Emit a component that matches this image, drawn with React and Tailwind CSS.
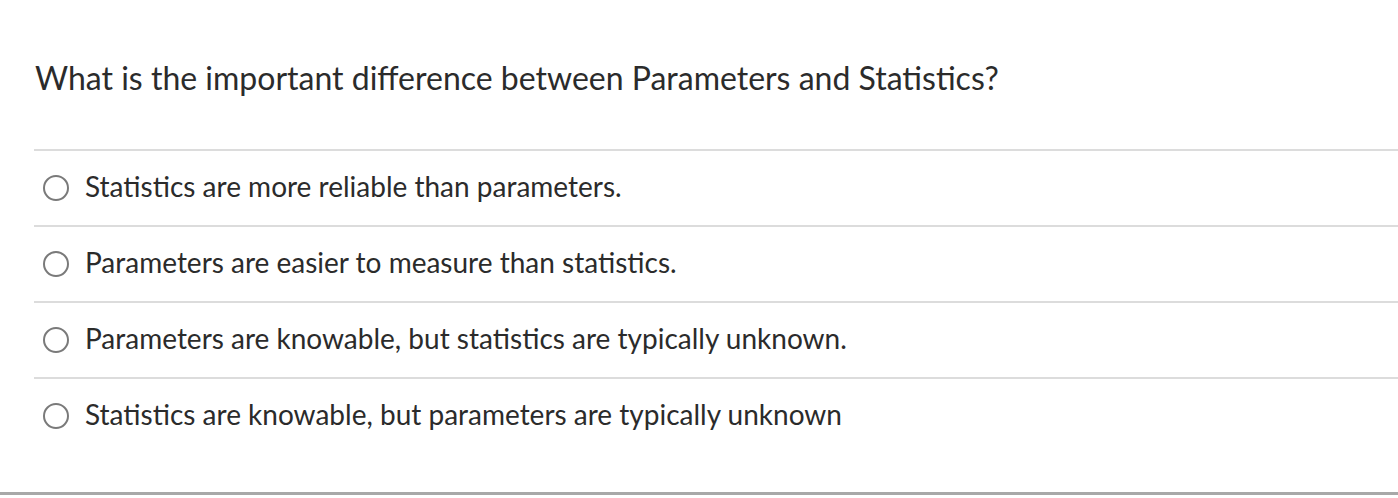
import React from 'react';

const answers = [
  'Statistics are more reliable than parameters.',
  'Parameters are easier to measure than statistics.',
  'Parameters are knowable, but statistics are typically unknown.',
  'Statistics are knowable, but parameters are typically unknown',
];

function Answer({ text }) {
  return (
    <div className="flex items-center h-[76px] border-t-2 border-[#dcdcdc] pl-[9px]">
      <span className="w-[26px] h-[26px] rounded-full border-2 border-[#7a7a7a] shrink-0" />
      <span className="ml-[16px] mb-[4px] text-[28px] text-[#2b2b2b] leading-none">{text}</span>
    </div>
  );
}

export default function App() {
  return (
    <div className="w-[1398px] h-[498px] bg-white font-['Lato',sans-serif] text-[#2b2b2b] flex flex-col">
      <div className="pl-[35px] pt-[58px] h-[149px]">
        <h1 className="text-[32px] leading-[40px]">
          What is the important difference between Parameters and Statistics?
        </h1>
      </div>
      <div className="ml-[34px]">
        {answers.map((a) => (
          <Answer key={a} text={a} />
        ))}
      </div>
      <div className="flex-1" />
      <div className="h-[3px] bg-[#a8a8a8] mb-[3px]" />
    </div>
  );
}
